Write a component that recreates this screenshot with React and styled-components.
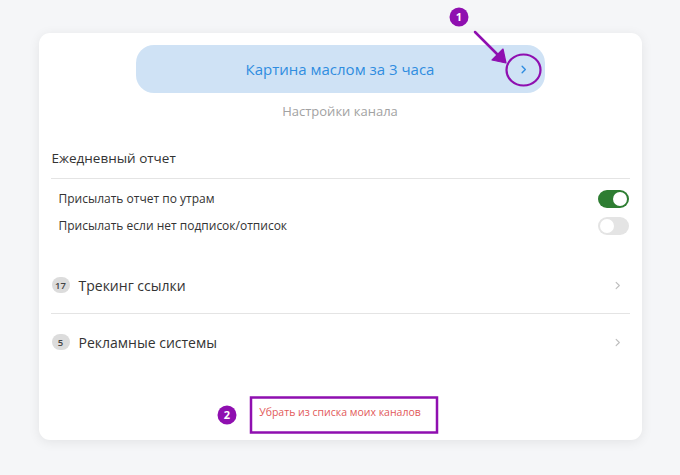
import React from "react";
import styled, { createGlobalStyle } from "styled-components";

const Global = createGlobalStyle`
  html, body { margin: 0; padding: 0; }
  body {
    background: #f5f6f8;
    font-family: "Open Sans", "Noto Sans", sans-serif;
    color: #333;
  }
`;

const Page = styled.div`
  position: relative;
  width: 680px;
  height: 475px;
  padding-top: 33px;
  box-sizing: border-box;
`;

const Card = styled.div`
  width: 603px;
  height: 407px;
  margin: 0 auto;
  box-sizing: border-box;
  background: #fff;
  border-radius: 11px;
  box-shadow: 0 2px 12px rgba(0, 0, 0, 0.08);
  padding: 12px 12px 0 12px;
  display: flex;
  flex-direction: column;
`;

const ChannelButton = styled.div`
  align-self: center;
  width: 409px;
  height: 48px;
  border-radius: 18px;
  background: #cfe2f5;
  display: grid;
  grid-template-columns: 44px 1fr 44px;
  align-items: center;
  color: #2f8de0;
  font-size: 15px;
  font-weight: 500;
`;

const ButtonTitle = styled.span`
  text-align: center;
`;

const ButtonChevron = styled.span`
  display: flex;
  justify-content: center;
  align-items: center;
  padding-left: 2px;
`;

const Subtitle = styled.div`
  margin-top: 10px;
  line-height: 16px;
  text-align: center;
  font-size: 13px;
  color: #a2a2a2;
`;

const SectionHeading = styled.div`
  margin-top: 29px;
  padding: 0 1px 10px 1px;
  line-height: 20px;
  font-size: 13.5px;
  color: #333;
  border-bottom: 1px solid #e4e4e4;
`;

const ToggleList = styled.div`
  margin-top: 6px;
  display: flex;
  flex-direction: column;
`;

const ToggleRow = styled.div`
  height: 27px;
  display: flex;
  align-items: center;
  justify-content: space-between;
  padding: 0 1px 0 8px;
  font-size: 12px;
  color: #333;
`;

const Toggle = styled.div`
  width: 31px;
  height: 18px;
  border-radius: 9px;
  background: ${(p) => (p.$on ? "#2e7d32" : "#e4e4e4")};
  display: flex;
  align-items: center;
  justify-content: ${(p) => (p.$on ? "flex-end" : "flex-start")};
  padding: 0 2px;
  box-sizing: border-box;
`;

const Knob = styled.div`
  width: 14px;
  height: 14px;
  border-radius: 50%;
  background: #fff;
`;

const NavList = styled.div`
  margin-top: 18px;
  display: flex;
  flex-direction: column;
`;

const NavRow = styled.div`
  height: 56px;
  display: flex;
  align-items: center;
  gap: 9px;
  padding: 0 7px 0 1px;
  font-size: 14px;
  color: #333;
  border-bottom: ${(p) => (p.$divider ? "1px solid #e4e4e4" : "none")};
`;

const CountBadge = styled.span`
  min-width: 18px;
  height: 16px;
  padding: 0 3px;
  box-sizing: border-box;
  border-radius: 8px;
  background: #dcdcdc;
  color: #444;
  font-size: 9.5px;
  font-weight: 600;
  display: inline-flex;
  align-items: center;
  justify-content: center;
`;

const NavLabel = styled.span`
  flex: 1;
`;

const RemoveLink = styled.div`
  margin-top: 34px;
  line-height: 16px;
  text-align: center;
  font-size: 10.5px;
  color: #e25a5a;
`;

const Overlay = styled.svg`
  position: absolute;
  left: 0;
  top: 0;
  pointer-events: none;
`;

const Chevron = ({ color, size = 12, width = 1.6 }) => (
  <svg width={size} height={size} viewBox="0 0 12 12" fill="none">
    <path d="M4.5 2.5L8 6l-3.5 3.5" stroke={color} strokeWidth={width} strokeLinecap="round" strokeLinejoin="round" />
  </svg>
);

const PURPLE = "#8f0fb0";

export default function App() {
  return (
    <>
      <Global />
      <Page>
        <Card>
          <ChannelButton>
            <span />
            <ButtonTitle>Картина маслом за 3 часа</ButtonTitle>
            <ButtonChevron>
              <Chevron color="#2f8de0" size={11} width={1.5} />
            </ButtonChevron>
          </ChannelButton>
          <Subtitle>Настройки канала</Subtitle>
          <SectionHeading>Ежедневный отчет</SectionHeading>
          <ToggleList>
            <ToggleRow>
              <span>Присылать отчет по утрам</span>
              <Toggle $on>
                <Knob />
              </Toggle>
            </ToggleRow>
            <ToggleRow>
              <span>Присылать если нет подписок/отписок</span>
              <Toggle>
                <Knob />
              </Toggle>
            </ToggleRow>
          </ToggleList>
          <NavList>
            <NavRow $divider>
              <CountBadge>17</CountBadge>
              <NavLabel>Трекинг ссылки</NavLabel>
              <Chevron color="#bdbdbd" size={11} width={1.2} />
            </NavRow>
            <NavRow>
              <CountBadge>5</CountBadge>
              <NavLabel>Рекламные системы</NavLabel>
              <Chevron color="#bdbdbd" size={11} width={1.2} />
            </NavRow>
          </NavList>
          <RemoveLink>Убрать из списка моих каналов</RemoveLink>
        </Card>
        <Overlay width="680" height="475" viewBox="0 0 680 475">
          <circle cx="459" cy="17" r="9.5" fill={PURPLE} />
          <text x="459" y="21" textAnchor="middle" fontSize="11" fontWeight="700" fill="#fff" fontFamily="Open Sans, sans-serif">1</text>
          <line x1="475" y1="32" x2="499" y2="56" stroke={PURPLE} strokeWidth="2.5" strokeLinecap="round" />
          <path d="M492 60 L506 63 L503 49 Z" fill={PURPLE} stroke={PURPLE} strokeWidth="1.2" strokeLinejoin="round" />
          <ellipse cx="523.5" cy="70" rx="17" ry="15.5" fill="none" stroke={PURPLE} strokeWidth="2.2" />
          <circle cx="227" cy="415" r="9.5" fill={PURPLE} />
          <text x="227" y="419" textAnchor="middle" fontSize="11" fontWeight="700" fill="#fff" fontFamily="Open Sans, sans-serif">2</text>
          <rect x="251" y="397.5" width="186" height="35" fill="none" stroke={PURPLE} strokeWidth="2.5" />
        </Overlay>
      </Page>
    </>
  );
}
